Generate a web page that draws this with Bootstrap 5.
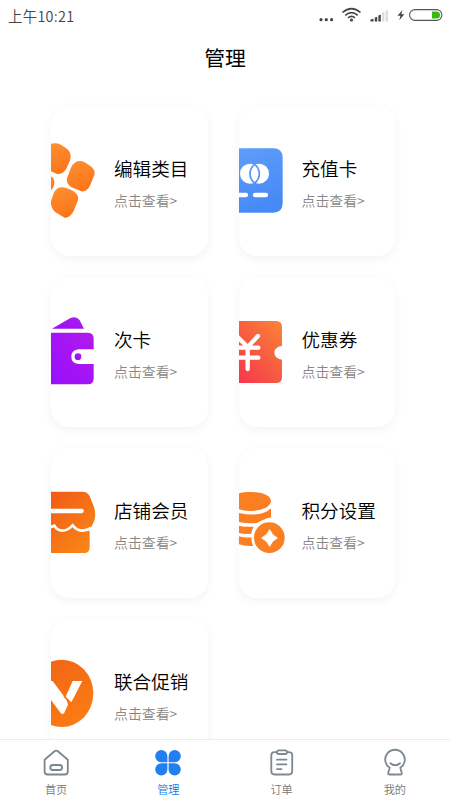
<!DOCTYPE html>
<html lang="zh-CN">
<head>
<meta charset="utf-8">
<meta name="viewport" content="width=device-width, initial-scale=1">
<title>管理</title>
<link href="https://cdn.jsdelivr.net/npm/bootstrap@5.3.0/dist/css/bootstrap.min.css" rel="stylesheet">
<style>
body{font-family:"Noto Sans CJK SC",sans-serif;font-weight:350;background:#fff;color:#111}
.screen{height:800px}
.status{height:32px;padding:0 7px 0 8px;color:#444}
.clock{font-size:14.4px;line-height:31px;letter-spacing:.3px}
.title-bar{height:50px;font-size:20.8px;line-height:50px;color:#000}
.tiles{display:grid;grid-template-columns:156.5px 156px;column-gap:31px;row-gap:21px;padding:24px 0 0 51px}
.tile{height:150px;border-radius:18px;background:#fff;box-shadow:0 3px 10px rgba(0,0,0,.05)}
.tile svg{width:50px;height:150px;flex:none}
.tile-text{padding:48px 0 0 13px;white-space:nowrap}
.tile-name{font-size:18.6px;line-height:28px;color:#000}
.tile-link{font-size:13.9px;line-height:20px;margin-top:8px;color:#888}
.tabs{height:61px;border-top:1px solid #ececee}
.tab{font-size:11.2px;line-height:16px;color:#777;padding:8px 0 0 1px}
.tab.active{padding-left:2px}
.tab:nth-child(n+3){padding-left:3px}
.tab svg{width:30px;height:30px;margin-bottom:3px}
.tab.active{color:#0a7be6}
</style>
<script src="https://cdn.jsdelivr.net/npm/bootstrap@5.3.0/dist/js/bootstrap.bundle.min.js"></script>
</head>
<body>
<div class="screen d-flex flex-column overflow-hidden">
  <header class="flex-shrink-0">
    <div class="status d-flex justify-content-between">
      <span class="clock">上午10:21</span>
      <svg width="127" height="32" viewBox="316 0 127 32">
        <g fill="#444"><circle cx="321" cy="19.7" r="1.6"/><circle cx="326.3" cy="19.7" r="1.6"/><circle cx="331.6" cy="19.7" r="1.6"/><circle cx="351.5" cy="20" r="1.6"/></g>
        <g fill="none" stroke="#444" stroke-width="1.6"><path d="M342.500 12.500Q351.500 4.800 360.500 12.500"/><path d="M345.300 15.300Q351.500 10 357.700 15.300"/><path d="M348 17.900Q351.500 15 355 17.900"/></g>
        <g fill="#444"><path d="M370.500 21.500v-2l3-.8v2.800zM374.800 21.500v-4l2.400-.8v4.800zM378.400 21.500v-6l2.400-.9v6.900z"/><path fill="#ddd" d="M382 21.500v-9l2.400-1v10zM385.600 21.500V11l2.400-1.200v11.700z"/></g>
        <path d="M402.500 10L397.500 15.800h3l-1.200 4.500 5-6h-3z" fill="#444"/>
        <rect x="409.600" y="9.600" width="32.300" height="10.800" rx="5.400" fill="none" stroke="#555" stroke-width="1.1"/>
        <path d="M432 11.500h4.500a3.500 3.500 0 0 1 0 7H432z" fill="#3bb911"/>
      </svg>
    </div>
    <h1 class="title-bar text-center fw-normal m-0">管理</h1>
  </header>

  <main class="tiles flex-grow-1 overflow-hidden align-content-start">
    <div class="tile d-flex overflow-hidden">
      <svg viewBox="33 33 150 450">
        <defs><linearGradient id="orange" x2=".3" y2="1"><stop stop-color="#ff9030"/><stop offset="1" stop-color="#fb761b"/></linearGradient></defs>
        <g fill="url(#orange)"><path d="M33 146Q48 143 63 149L82 162Q97 177 90 196L79 221Q69 238 51 237L33 229Z"/><path d="M106 202Q119 194 133 201L154 215Q167 226 163 240L150 272Q140 291 124 289L93 276Q78 265 81 250L92 220Q97 208 106 202Z"/><path d="M33 244Q43 248 43 264Q42 278 33 285Z"/><path d="M53 280Q65 274 78 278L100 288Q117 299 114 315L102 346Q92 368 75 369L50 354Q31 342 33 318L40 298Q44 286 53 280Z"/></g>
      </svg>
      <div class="tile-text"><div class="tile-name">编辑类目</div><div class="tile-link">点击查看&gt;</div></div>
    </div>
    <div class="tile d-flex overflow-hidden">
      <svg viewBox="42 33 150 450">
        <defs><linearGradient id="blue" x2=".3" y2="1"><stop stop-color="#5f9dfa"/><stop offset="1" stop-color="#478af5"/></linearGradient></defs>
        <path d="M42 160H145Q173 160 173 189V324Q173 353 145 353H42Z" fill="url(#blue)"/>
        <circle cx="75" cy="236" r="30" fill="#fff"/><circle cx="102" cy="236" r="30" fill="#fff"/>
        <path d="M89 208Q75 219 75 236T89 264Q103 253 103 236T89 208Z" fill="#fff" stroke="#5594f7" stroke-width="5"/>
        <path d="M36 300H63M90 300H123" stroke="#fff" stroke-width="13" stroke-linecap="round"/>
      </svg>
      <div class="tile-text"><div class="tile-name">充值卡</div><div class="tile-link">点击查看&gt;</div></div>
    </div>
    <div class="tile d-flex overflow-hidden">
      <svg viewBox="33 21 150 450">
        <defs><linearGradient id="purple" x1="1" x2="0" y2="1"><stop stop-color="#b11aed"/><stop offset="1" stop-color="#970ffc"/></linearGradient></defs>
        <g fill="url(#purple)"><path d="M36 176L90 145Q109 136 119 151L132 176Z"/><path d="M33 188H144Q161 188 161 206V238H116Q94 241 94 260T116 282H161V325Q161 343 144 343H33Z"/><circle cx="114" cy="260" r="10"/></g>
      </svg>
      <div class="tile-text"><div class="tile-name">次卡</div><div class="tile-link">点击查看&gt;</div></div>
    </div>
    <div class="tile d-flex overflow-hidden">
      <svg viewBox="42 21 150 450">
        <defs><linearGradient id="red" x1=".9" x2=".1" y2="1"><stop stop-color="#fa8138"/><stop offset=".55" stop-color="#f65a42"/><stop offset="1" stop-color="#f83a4b"/></linearGradient></defs>
        <path d="M42 153H153Q171 153 171 171V227Q148 232 148 248T171 269V321Q171 339 153 339H42Z" fill="url(#red)"/>
        <path d="M36 199L68 231L99 198M36 233H100M36 263H100M68 231V297" fill="none" stroke="#fff" stroke-width="13" stroke-linecap="round"/>
      </svg>
      <div class="tile-text"><div class="tile-name">优惠券</div><div class="tile-link">点击查看&gt;</div></div>
    </div>
    <div class="tile d-flex overflow-hidden">
      <svg viewBox="33 24 150 450">
        <defs><linearGradient id="shop" x1="0" x2=".7" y2="1"><stop stop-color="#f15a16"/><stop offset="1" stop-color="#fa8416"/></linearGradient></defs>
        <path d="M33 155H127Q142 155 149 168L162 201Q168 219 164 238Q157 263 145 267L149 275V321Q149 339 132 339H33Z" fill="url(#shop)"/>
        <path d="M25 213H125" stroke="#fff" stroke-width="13" stroke-linecap="round"/>
        <path d="M31 262L43 257Q52 272 67 272Q82 272 98 256Q111 272 128 272Q140 272 153 264" fill="none" stroke="#fff" stroke-width="8"/>
      </svg>
      <div class="tile-text"><div class="tile-name">店铺会员</div><div class="tile-link">点击查看&gt;</div></div>
    </div>
    <div class="tile d-flex overflow-hidden">
      <svg viewBox="42 24 150 450">
        <g fill="#fb7f22"><path d="M42 160Q55 155 82 156Q136 159 138 184Q135 208 82 213Q58 214 42 208Z"/><path d="M42 219Q110 233 138 205V232Q110 240 96 249Q68 252 42 246Z"/><path d="M42 257Q62 262 86 260Q80 270 79 281Q58 284 42 279Z"/><path d="M42 289Q59 294 79 292Q79 307 84 318Q58 319 42 313Z"/><circle cx="133" cy="293" r="46"/></g>
        <path d="M134 269Q140 286 157 294Q140 302 134 319Q127 302 110 294Q127 286 134 269Z" fill="#fff" stroke="#fff" stroke-width="3" stroke-linejoin="round"/>
      </svg>
      <div class="tile-text"><div class="tile-name">积分设置</div><div class="tile-link">点击查看&gt;</div></div>
    </div>
    <div class="tile d-flex overflow-hidden">
      <svg viewBox="33 27 150 450">
        <defs><linearGradient id="promo" x1="0" x2=".7" y2="1"><stop stop-color="#f06016"/><stop offset="1" stop-color="#fb7c14"/></linearGradient></defs>
        <ellipse cx="65" cy="250" rx="95" ry="101" fill="url(#promo)"/>
        <path d="M33 213H38L80 270L84 284L73 308Q68 316 62 309L33 270ZM98 213H127L94 277L77 260Z" fill="#fff"/>
        <path d="M72 258L92 282" stroke="#f57116" stroke-width="4"/>
      </svg>
      <div class="tile-text"><div class="tile-name">联合促销</div><div class="tile-link">点击查看&gt;</div></div>
    </div>
  </main>

  <nav class="tabs row g-0 flex-shrink-0 text-center bg-white">
    <div class="tab col d-flex flex-column align-items-center">
      <svg viewBox="0 0 30 30" fill="none" stroke="#7b878e" stroke-width="1.8" stroke-linejoin="round"><path d="M3.600 11.700L13.500 3.300Q15.200 2 16.900 3.300L26.800 11.700V23.500Q26.800 26.500 23.800 26.500H6.600Q3.600 26.500 3.600 23.500Z"/><rect x="9.300" y="17" width="11.800" height="5" rx="2.500"/></svg>
      <span>首页</span>
    </div>
    <div class="tab active col d-flex flex-column align-items-center">
      <svg viewBox="0 0 30 30" fill="#217ff2"><path d="M14.400 14.200H8A6.100 6.100 0 1 1 14.400 8ZM15.600 14.200H22A6.100 6.100 0 1 0 15.600 8ZM14.400 15.300H8A6.100 6.100 0 1 0 14.400 21.500ZM15.600 15.300H22A6.100 6.100 0 1 1 15.600 21.500Z"/></svg>
      <span>管理</span>
    </div>
    <div class="tab col d-flex flex-column align-items-center">
      <svg viewBox="0 0 30 30" fill="none" stroke="#7b8992" stroke-width="1.8" stroke-linecap="round"><path d="M10 4.200H7.500Q4.300 4.200 4.300 7.400V23.300Q4.300 26.500 7.500 26.500H22Q25.200 26.500 25.200 23.300V7.400Q25.200 4.200 22 4.200H20"/><rect x="10" y="2.300" width="10" height="3.700" rx="1.800"/><path d="M10 11.700H19.500M10 16.400H19.500M10 21.100H14.500"/></svg>
      <span>订单</span>
    </div>
    <div class="tab col d-flex flex-column align-items-center">
      <svg viewBox="0 0 30 30" fill="none" stroke="#7b8992" stroke-width="1.800" stroke-linecap="round" stroke-linejoin="round"><path d="M9.700 19.800A9.800 9.800 0 1 1 20.300 19.800L21.800 25Q22 26.500 20.500 26.500H9.500Q8 26.500 8.200 25Z"/><path d="M10.300 15.300Q15.200 19.300 20 15.300"/></svg>
      <span>我的</span>
    </div>
  </nav>
</div>
</body>
</html>
